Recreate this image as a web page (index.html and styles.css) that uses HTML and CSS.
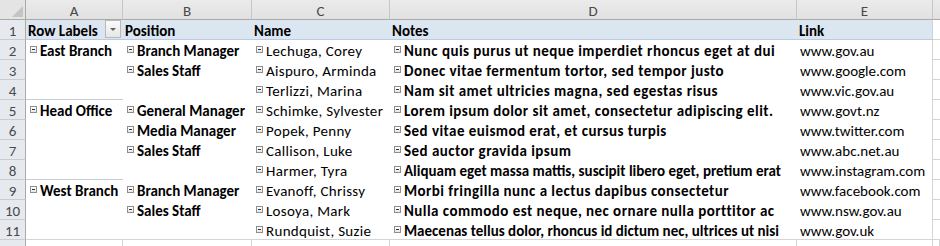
FILE: index.html
```html
<!DOCTYPE html>
<html>
<head>
<meta charset="utf-8">
<link rel="stylesheet" href="styles.css">
</head>
<body>
<div class="sheet">
  <div class="corner"><span class="tri"></span></div>
  <div class="ch">A</div><div class="ch">B</div><div class="ch">C</div><div class="ch">D</div><div class="ch">E</div><div class="ch chx"></div>

  <div class="rh">1</div>
  <div class="ph b">Row Labels<span class="dd"></span></div>
  <div class="ph b">Position</div>
  <div class="ph b">Name</div>
  <div class="ph b">Notes</div>
  <div class="ph b last">Link</div>
  <div class="ex"></div>

  <div class="rh">2</div>
  <div class="c b"><span class="tog"></span>East Branch</div>
  <div class="c b"><span class="tog"></span>Branch Manager</div>
  <div class="c n"><span class="tog"></span>Lechuga, Corey</div>
  <div class="c b d"><span class="tog"></span>Nunc quis purus ut neque imperdiet rhoncus eget at dui</div>
  <div class="c last">www.gov.au</div>
  <div class="ex"></div>

  <div class="rh">3</div>
  <div class="c"></div>
  <div class="c b"><span class="tog"></span>Sales Staff</div>
  <div class="c n"><span class="tog"></span>Aispuro, Arminda</div>
  <div class="c b d"><span class="tog"></span>Donec vitae fermentum tortor, sed tempor justo</div>
  <div class="c last">www.google.com</div>
  <div class="ex"></div>

  <div class="rh">4</div>
  <div class="c sep"></div>
  <div class="c"></div>
  <div class="c n"><span class="tog"></span>Terlizzi, Marina</div>
  <div class="c b d"><span class="tog"></span>Nam sit amet ultricies magna, sed egestas risus</div>
  <div class="c last">www.vic.gov.au</div>
  <div class="ex"></div>

  <div class="rh">5</div>
  <div class="c b"><span class="tog"></span>Head Office</div>
  <div class="c b"><span class="tog"></span>General Manager</div>
  <div class="c n"><span class="tog"></span>Schimke, Sylvester</div>
  <div class="c b d"><span class="tog"></span>Lorem ipsum dolor sit amet, consectetur adipiscing elit.</div>
  <div class="c last">www.govt.nz</div>
  <div class="ex"></div>

  <div class="rh">6</div>
  <div class="c"></div>
  <div class="c b"><span class="tog"></span>Media Manager</div>
  <div class="c n"><span class="tog"></span>Popek, Penny</div>
  <div class="c b d"><span class="tog"></span>Sed vitae euismod erat, et cursus turpis</div>
  <div class="c last">www.twitter.com</div>
  <div class="ex"></div>

  <div class="rh">7</div>
  <div class="c"></div>
  <div class="c b"><span class="tog"></span>Sales Staff</div>
  <div class="c n"><span class="tog"></span>Callison, Luke</div>
  <div class="c b d"><span class="tog"></span>Sed auctor gravida ipsum</div>
  <div class="c last">www.abc.net.au</div>
  <div class="ex"></div>

  <div class="rh">8</div>
  <div class="c sep"></div>
  <div class="c"></div>
  <div class="c n"><span class="tog"></span>Harmer, Tyra</div>
  <div class="c b d t"><span class="tog"></span>Aliquam eget massa mattis, suscipit libero eget, pretium erat</div>
  <div class="c last">www.instagram.com</div>
  <div class="ex"></div>

  <div class="rh">9</div>
  <div class="c b"><span class="tog"></span>West Branch</div>
  <div class="c b"><span class="tog"></span>Branch Manager</div>
  <div class="c n"><span class="tog"></span>Evanoff, Chrissy</div>
  <div class="c b d"><span class="tog"></span>Morbi fringilla nunc a lectus dapibus consectetur</div>
  <div class="c last">www.facebook.com</div>
  <div class="ex"></div>

  <div class="rh">10</div>
  <div class="c"></div>
  <div class="c b"><span class="tog"></span>Sales Staff</div>
  <div class="c n"><span class="tog"></span>Losoya, Mark</div>
  <div class="c b d"><span class="tog"></span>Nulla commodo est neque, nec ornare nulla porttitor ac</div>
  <div class="c last">www.nsw.gov.au</div>
  <div class="ex"></div>

  <div class="rh">11</div>
  <div class="c end"></div>
  <div class="c end"></div>
  <div class="c end n"><span class="tog"></span>Rundquist, Suzie</div>
  <div class="c end b d t"><span class="tog"></span>Maecenas tellus dolor, rhoncus id dictum nec, ultrices ut nisi</div>
  <div class="c end last">www.gov.uk</div>
  <div class="ex"></div>

  <div class="rh"></div>
  <div class="g"></div><div class="g"></div><div class="g"></div><div class="g"></div><div class="g"></div><div class="g"></div>
</div>
</body>
</html>
```

FILE: styles.css
```css
html, body {
  margin: 0;
  padding: 0;
  background: #ffffff;
  overflow: hidden;
}

.sheet {
  display: grid;
  grid-template-columns: 26px 97px 129px 138px 407px 136px 1fr;
  grid-auto-rows: 20px;
  width: 940px;
  font-family: Carlito, Calibri, Lato, "Liberation Sans", sans-serif;
  font-size: 15px;
  color: #000;
}

.sheet > div {
  box-sizing: border-box;
  white-space: nowrap;
  overflow: hidden;
  line-height: 23px;
}

.corner {
  position: relative;
  background: #e4e4e4;
  border-right: 1px solid #a9a9a9;
  border-bottom: 1px solid #a9a9a9;
}

.tri {
  position: absolute;
  right: 2px;
  bottom: 2px;
  width: 0;
  height: 0;
  border-left: 11px solid transparent;
  border-bottom: 11px solid #c4c4c4;
}

.ch {
  background: linear-gradient(#ebebeb, #e1e1e1);
  border-right: 1px solid #c6c6c6;
  border-bottom: 1px solid #a9a9a9;
  text-align: center;
  color: #4a4a4a;
}

.chx {
  border-right: none;
}

.rh {
  background: #e6e9ee;
  border-right: 1px solid #a9a9a9;
  border-bottom: 1px solid #c9cdd3;
  text-align: center;
  color: #4a4a4a;
}

.ph {
  position: relative;
  background: #dce6f1;
  border-bottom: 1px solid #b8cce4;
  padding-left: 2px;
}

.ph.last {
  border-right: 1px solid #c8d3de;
}

.c {
  background: #fff;
  padding-left: 2px;
}

.c.n {
  letter-spacing: 0.3px;
}

.c.d {
  letter-spacing: 0.45px;
}

.c.d.t {
  letter-spacing: 0;
}

.c.last {
  border-right: 1px solid #d4d4d4;
  padding-left: 3px;
}

.c.sep {
  border-bottom: 1px solid #c5ccd6;
}

.c.end {
  border-bottom: 1px solid #d4d4d4;
}

.ex {
  background: #fff;
  border-bottom: 1px solid #d4d4d4;
}

.g {
  background: #fff;
  border-right: 1px solid #d4d4d4;
  border-bottom: 1px solid #d4d4d4;
}

.b {
  font-weight: bold;
}

.tog {
  display: inline-block;
  position: relative;
  box-sizing: border-box;
  width: 7px;
  height: 7px;
  margin-left: 2px;
  margin-right: 3px;
  vertical-align: 3px;
  border: 1px solid #8e8e8e;
  background: linear-gradient(#ffffff, #e8e8e8);
}

.tog::after {
  content: "";
  position: absolute;
  left: 1px;
  top: 2px;
  width: 3px;
  height: 1px;
  background: #333;
}

.dd {
  position: absolute;
  left: 79px;
  top: 0px;
  width: 16px;
  height: 18px;
  box-sizing: border-box;
  border: 1px solid #b9b9b9;
  background: linear-gradient(#fbfbfb, #e6e6e6);
}

.dd::after {
  content: "";
  position: absolute;
  left: 4px;
  top: 7px;
  width: 0;
  height: 0;
  border-left: 3px solid transparent;
  border-right: 3px solid transparent;
  border-top: 3px solid #606060;
}
```
